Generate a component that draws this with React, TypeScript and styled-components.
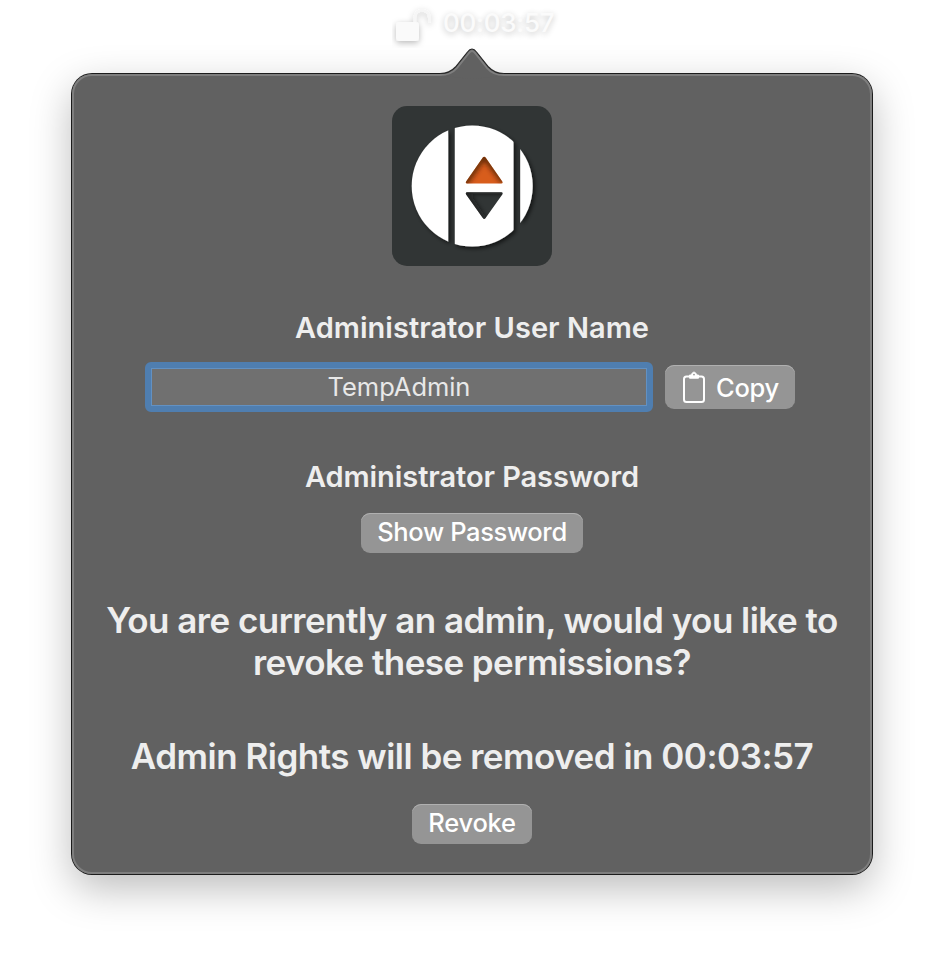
import React from "react";
import styled, { createGlobalStyle } from "styled-components";

const GlobalStyle = createGlobalStyle`
  * { box-sizing: border-box; }
  html, body { margin: 0; padding: 0; background: #fff; }
  body { overflow: hidden; }
`;

const Screen = styled.main`
  width: 944px;
  height: 954px;
  display: flex;
  flex-direction: column;
  align-items: center;
  background: #fff;
  font-family: Inter, "Liberation Sans", sans-serif;
  color: #eeeeee;
  overflow: hidden;
`;

const StatusItem = styled.header`
  position: relative;
  z-index: 1;
  height: 48px;
  width: 160px;
  display: flex;
  align-items: flex-start;
  white-space: nowrap;
`;

const LockIcon = styled.svg`
  display: block;
  flex: none;
  width: 50px;
  height: 48px;
`;

const StatusTime = styled.span`
  margin-left: 1px;
  font-size: 26px;
  line-height: 46px;
  font-weight: 500;
  letter-spacing: -0.25px;
  color: #fbfbfb;
  text-shadow: 0 2px 6px rgba(0, 0, 0, 0.24);
`;

const Popover = styled.section`
  position: relative;
  width: 800px;
  height: 800px;
  margin-top: 26px;
  padding-top: 32px;
  border-radius: 20px;
  background: #616161;
  box-shadow: inset 0 0 0 2px #7e7e7e, 0 0 0 1px #1c1c1c,
    0 14px 42px rgba(0, 0, 0, 0.27);
  display: flex;
  flex-direction: column;
  align-items: center;
`;

const Arrow = styled.svg`
  position: absolute;
  left: 364px;
  top: -27px;
  width: 72px;
  height: 32px;
`;

const Logo = styled.svg`
  display: block;
  flex: none;
  width: 160px;
  height: 160px;
`;

const Label = styled.h2<{ $top: number; $spacing: number }>`
  margin: ${(p) => p.$top}px 0 0;
  font-size: 29px;
  line-height: 36px;
  font-weight: 600;
  letter-spacing: ${(p) => p.$spacing}px;
  white-space: nowrap;
`;

const UserRow = styled.div`
  align-self: stretch;
  display: flex;
  align-items: center;
  gap: 12px;
  height: 50px;
  margin: 16px 0 0;
  padding-left: 73px;
`;

const NameField = styled.div`
  width: 508px;
  height: 50px;
  border: 6px solid #4f7eb0;
  border-radius: 6px;
  background: #707070;
  box-shadow: inset 0 -1px 0 #8d8d8d;
  outline: 1px solid #6291c3;
  outline-offset: -7px;
  text-align: center;
  font-size: 25.5px;
  line-height: 38px;
  letter-spacing: -0.05px;
  color: #e8e8e8;
`;

const Button = styled.button<{ $width: number; $height?: number; $top?: number; $spacing?: number; $lift?: number }>`
  width: ${(p) => p.$width}px;
  height: ${(p) => p.$height ?? 40}px;
  flex: none;
  margin: ${(p) => p.$top ?? 0}px 0 0;
  padding: 0 0 ${(p) => p.$lift ?? 2}px;
  border: 0;
  border-radius: 9px;
  background: #959595;
  box-shadow: inset 0 1px 0 #b0b0b0;
  color: #fff;
  font: 500 25.5px/36px Inter, "Liberation Sans", sans-serif;
  letter-spacing: ${(p) => p.$spacing ?? -0.25}px;
  display: flex;
  align-items: center;
  justify-content: center;
  white-space: nowrap;
`;

const ButtonText = styled.span`
  padding-top: 2px;
`;

const ClipboardIcon = styled.svg`
  width: 24px;
  height: 34px;
  margin: 0 10px 1px 1px;
  flex: none;
`;

const Message = styled.p<{ $top: number; $spacing: number }>`
  margin: ${(p) => p.$top}px 0 0;
  font-size: 35px;
  line-height: 42px;
  font-weight: 600;
  letter-spacing: ${(p) => p.$spacing}px;
  text-align: center;
  white-space: nowrap;
`;

const Line = styled.span<{ $spacing: number }>`
  display: block;
  letter-spacing: ${(p) => p.$spacing}px;
`;

const AppLogo = () => (
  <Logo viewBox="0 0 160 160">
    <defs>
      <clipPath id="bands">
        <path d="M0 0H56.2V160H0zM62.8 0H121.5V160H62.8zM128.2 0H160V160H128.2z" />
      </clipPath>
      <filter id="discShadow" x="-20%" y="-20%" width="140%" height="140%">
        <feDropShadow dx="2" dy="2" stdDeviation="2.2" floodColor="#000" floodOpacity=".65" />
      </filter>
      <filter id="soft" x="-30%" y="-30%" width="160%" height="160%">
        <feGaussianBlur stdDeviation="2.4" />
      </filter>
      <clipPath id="upClip">
        <path d="M92.2 50.7Q93 50.7 93.6 51.6L110.3 75.4Q111.3 77.6 109.2 77.6H75.2Q73.1 77.6 74.1 75.4L90.8 51.6Q91.4 50.7 92.2 50.7z" />
      </clipPath>
      <clipPath id="downClip">
        <path d="M92.2 113Q91.4 113 90.8 112.1L74.1 88.4Q73.1 86.2 75.2 86.2H109.2Q111.3 86.2 110.3 88.4L93.6 112.1Q93 113 92.2 113z" />
      </clipPath>
    </defs>
    <rect width="160" height="160" rx="15" fill="#313535" />
    <g filter="url(#discShadow)">
      <g clipPath="url(#bands)">
        <circle cx="80.2" cy="80" r="60.5" fill="#fff" />
      </g>
    </g>
    <g clipPath="url(#upClip)">
      <rect x="70" y="48" width="45" height="32" fill="#d85d1c" />
      <path d="M71 80L92.2 50L112 76" fill="none" stroke="#3d1b08" strokeOpacity=".75" strokeWidth="6" filter="url(#soft)" />
    </g>
    <g clipPath="url(#downClip)">
      <rect x="70" y="84" width="45" height="32" fill="#313535" />
      <path d="M70 85H115M72 84L92 114" stroke="#151616" strokeOpacity=".6" strokeWidth="6" filter="url(#soft)" />
    </g>
  </Logo>
);

export default function App() {
  return (
    <>
      <GlobalStyle />
      <Screen>
        <StatusItem>
          <LockIcon viewBox="0 0 50 48">
            <defs>
              <filter id="lockShadow" x="-50%" y="-50%" width="200%" height="200%">
                <feDropShadow dx="0" dy="2" stdDeviation="3" floodColor="#000" floodOpacity=".27" />
              </filter>
            </defs>
            <g filter="url(#lockShadow)">
              <path d="M22.8 23V17.5C22.8 8.2 37.3 8.2 37.3 17.5V21.5" fill="none" stroke="#f6f6f6" strokeWidth="2.6" strokeLinecap="round" />
              <rect x="4" y="22" width="23" height="19" rx="3.5" fill="#fafafa" />
            </g>
          </LockIcon>
          <StatusTime>00:03:57</StatusTime>
        </StatusItem>
        <Popover>
          <Arrow viewBox="0 0 72 32">
            <path d="M4 29V26.5C11 26.5 15 25 19.5 20L31.5 5Q36 -1 40.5 5L52.5 20C57 25 61 26.5 68 26.5V29H64L36 32 8 29z" fill="#616161" />
            <path d="M4 28C12.5 28 17 25.5 21 20.8L32.8 6.2Q36 2 39.2 6.2L51 20.8C55 25.5 59.5 28 68 28" fill="none" stroke="#7e7e7e" strokeWidth="2" />
            <path d="M4 26.5C11 26.5 15 25 19.5 20L31.5 5Q36 -1 40.5 5L52.5 20C57 25 61 26.5 68 26.5" fill="none" stroke="#292929" strokeWidth="1.2" />
          </Arrow>
          <AppLogo />
          <Label $top={44} $spacing={0.02}>Administrator User Name</Label>
          <UserRow>
            <NameField>TempAdmin</NameField>
            <Button $width={130} $height={44} $lift={0}>
              <ClipboardIcon viewBox="0 0 24 34" fill="none" stroke="#fff">
                <path d="M7 6.5H4.5Q2 6.5 2 9V29.5Q2 32 4.5 32H19.5Q22 32 22 29.5V9Q22 6.5 19.5 6.5H17" strokeWidth="2" />
                <path d="M7.5 5H9.6C9.8 1.2 14.2 1.2 14.4 5H16.5V8.2H7.5z" fill="#fff" strokeWidth="1" strokeLinejoin="round" />
                <circle cx="12" cy="4.6" r=".9" fill="#959595" stroke="none" />
              </ClipboardIcon>
              <ButtonText>Copy</ButtonText>
            </Button>
          </UserRow>
          <Label $top={47} $spacing={-0.08}>Administrator Password</Label>
          <Button $width={222} $top={18} $spacing={-0.35}>Show Password</Button>
          <Message $top={46} $spacing={0}>
            <Line $spacing={-0.53}>You are currently an admin, would you like to</Line>
            <Line $spacing={-0.57}>revoke these permissions?</Line>
          </Message>
          <Message $top={52} $spacing={-0.51}>Admin Rights will be removed in 00:03:57</Message>
          <Button $width={120} $top={27}>Revoke</Button>
        </Popover>
      </Screen>
    </>
  );
}
